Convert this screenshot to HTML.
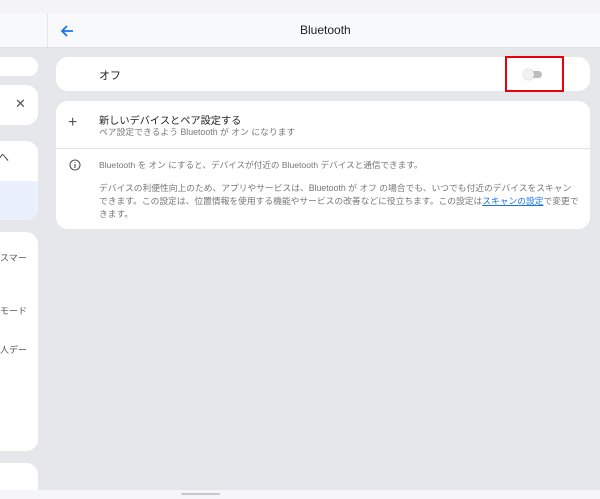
<!DOCTYPE html><html style="overflow:hidden;height:499px"><head><style>
body{margin:0;width:600px;height:499px;background:#e6e7eb;font-family:"Liberation Sans","Noto Sans CJK JP",sans-serif;position:relative;overflow:hidden}
.a{position:absolute}
.card{position:absolute;background:#fff;border-radius:12px}
.t{position:absolute;white-space:nowrap}
</style></head><body>
<div class="a" style="left:0;top:0;width:600px;height:13px;background:#f4f4f6"></div>
<div class="a" style="left:0;top:13px;width:600px;height:34px;background:#f8f9fa;border-bottom:1px solid #e0e1e5"></div>
<div class="a" style="left:47px;top:13px;width:1px;height:34px;background:#e6e7ea"></div>
<svg class="a" style="left:59px;top:23px" width="16" height="16" viewBox="0 0 16 16"><path d="M14 8H3M8 3L3 8l5 5" stroke="#1a73e8" stroke-width="1.8" fill="none"/></svg>
<div class="t" style="left:300px;top:23px;font-size:12px;color:#222">Bluetooth</div>
<div class="card" style="left:-12px;top:57px;width:50px;height:19px;border-radius:9px"></div>
<div class="card" style="left:-12px;top:85px;width:50px;height:40px"></div>
<div class="t" style="left:15px;top:96px;font-size:13px;color:#555">✕</div>
<div class="card" style="left:-12px;top:141px;width:50px;height:79px;overflow:hidden"><div class="a" style="left:0;top:40px;width:50px;height:39px;background:#eaf1fd"></div><div class="t" style="left:10px;top:8px;font-size:11px;color:#444">へ</div></div>
<div class="card" style="left:-12px;top:232px;width:50px;height:219px"></div>
<div class="t" style="left:0;top:251px;font-size:9px;color:#555">スマー</div>
<div class="t" style="left:0;top:304px;font-size:9px;color:#555">モード</div>
<div class="t" style="left:0;top:343px;font-size:9px;color:#555">人デー</div>
<div class="card" style="left:-12px;top:463px;width:50px;height:27px;border-radius:12px 12px 0 0"></div>
<div class="card" style="left:56px;top:57px;width:534px;height:34px"></div>
<div class="t" style="left:99px;top:67px;font-size:11px;color:#222">オフ</div>
<div class="a" style="left:526px;top:71px;width:16px;height:7px;border-radius:4px;background:#bdbdbd"></div>
<div class="a" style="left:523px;top:69px;width:11px;height:11px;border-radius:50%;background:#f1f1f1;box-shadow:0 0 1px #999"></div>
<div class="a" style="left:505px;top:56px;width:55px;height:32px;border:2px solid #e8000b"></div>
<div class="card" style="left:56px;top:101px;width:534px;height:128px"></div>
<div class="a" style="left:56px;top:148px;width:534px;height:1px;background:#e3e3e3"></div>
<div class="t" style="left:68px;top:114px;font-size:16px;color:#555;font-weight:300">+</div>
<div class="t" style="left:99px;top:112px;font-size:10.2px;color:#222">新しいデバイスとペア設定する</div>
<div class="t" style="left:99px;top:125px;font-size:8.8px;color:#777">ペア設定できるよう Bluetooth が オン になります</div>
<svg class="a" style="left:69px;top:159px" width="12" height="12" viewBox="0 0 12 12"><circle cx="6" cy="6" r="5" stroke="#555" fill="none" stroke-width="1.1"/><path d="M6 5v4M6 3.2v.8" stroke="#555" stroke-width="1.2"/></svg>
<div class="t" style="left:99px;top:159px;font-size:8.6px;color:#777">Bluetooth を オン にすると、デバイスが付近の Bluetooth デバイスと通信できます。</div>
<div class="t" style="left:99px;top:182px;font-size:8.75px;color:#777;line-height:13px">デバイスの利便性向上のため、アプリやサービスは、Bluetooth が オフ の場合でも、いつでも付近のデバイスをスキャン<br>できます。この設定は、位置情報を使用する機能やサービスの改善などに役立ちます。この設定は<span style="color:#1a73e8;text-decoration:underline">スキャンの設定</span>で変更で<br>きます。</div>
<div class="a" style="left:0;top:490px;width:600px;height:9px;background:#f6f6f8"></div>
<div class="a" style="left:181px;top:493px;width:39px;height:2px;background:#c8c8c8;border-radius:1px"></div>
</body></html>
